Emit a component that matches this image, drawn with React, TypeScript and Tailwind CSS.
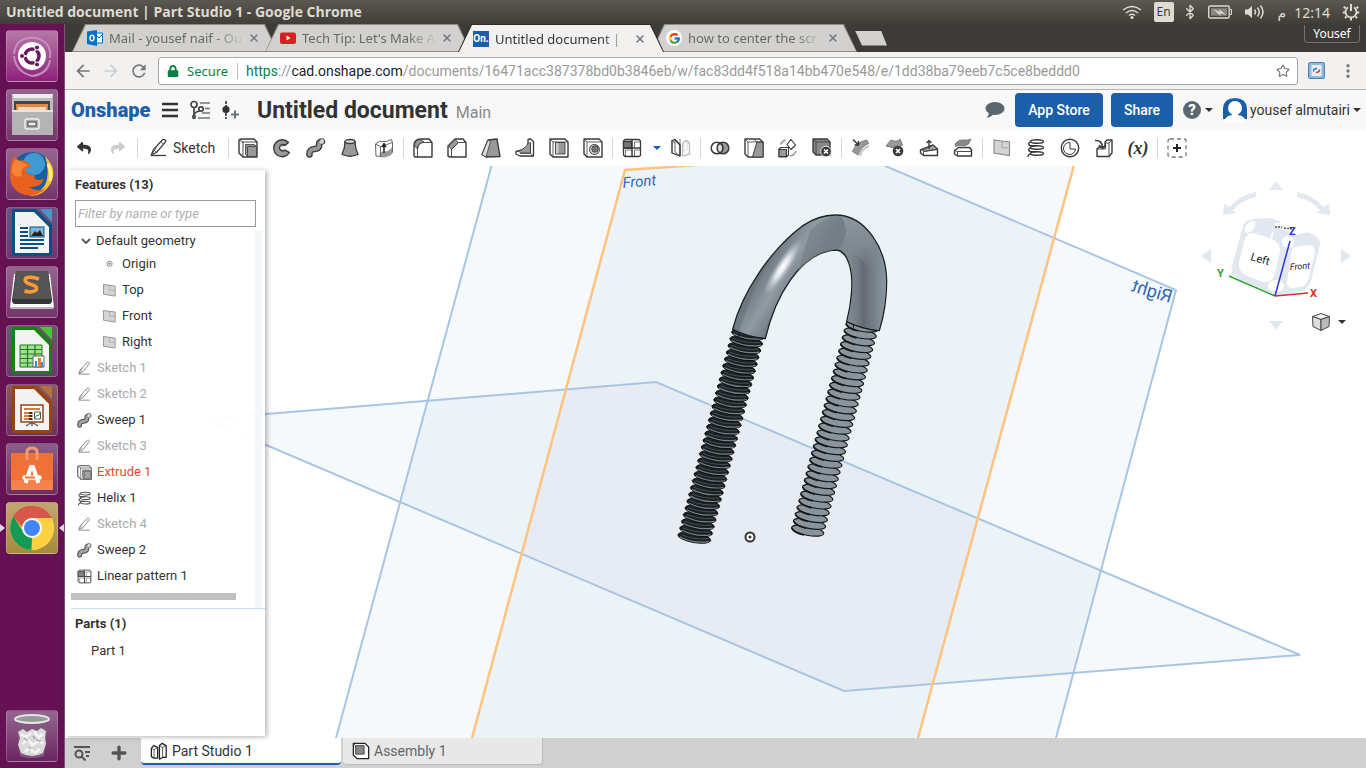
import type { ReactNode } from "react";
import { Bluetooth, MoreVertical, Plus, Star, X } from "lucide-react";
import { FcGoogle } from "react-icons/fc";
import { FaLock, FaReply, FaShare } from "react-icons/fa";
import { MdArrowBack, MdArrowForward, MdRefresh } from "react-icons/md";

const ink = "#3a3a3a";
const mid = "#999999";

/* ---------- feature icons, all on a 20 x 20 grid ---------- */

const icons: Record<string, ReactNode> = {
  sketch: (
    <g fill="none" stroke={ink} strokeWidth="1.3">
      <path d="M2 17.5h15" />
      <path d="M2.5 16.5l2-5L13.5 1.8q1.6-1 2.8.4.9 1-.2 2.2L7.5 14.5z" />
      <path d="M4.5 11.5l3 3M12 3.7l2.8 2.6M2.5 16.5l5-7" strokeWidth=".8" />
    </g>
  ),
  extrude: (
    <g stroke={ink} strokeWidth="1.4" strokeLinejoin="round">
      <path d="M1 3q0-2 2-2h13l3 3v15H5l-4-4z" fill="#fff" />
      <path d="M4 4h15M5 19V4M1.5 1.5L5 4.5" fill="none" strokeWidth=".9" />
      <path d="M7.5 6.5h9l2 2v10h-9l-2-2z" fill={mid} strokeWidth=".8" />
      <path d="M9.5 8.5h9M9.5 8.5v10" strokeWidth=".8" />
    </g>
  ),
  revolve: (
    <g stroke={ink} strokeWidth="1.4" strokeLinejoin="round">
      <path d="M16.5 4.500A8.500 8.500 0 1 0 17.500 14.500l-4.500-2.500a3.200 3.200 0 1 1 0-4.500z" fill={mid} />
      <path d="M9.500 8.500l3-1.500 4-2.500M9.500 12l3 .5 5 2" fill="none" strokeWidth=".8" />
    </g>
  ),
  sweep: (
    <g fill="none" strokeLinecap="round">
      <path d="M3.5 16.5q-.5-5 5-5.500t4.500-4.500q0-2.500 3-3" stroke={ink} strokeWidth="6.500" />
      <path d="M3.5 16.5q-.5-5 5-5.500t4.500-4.500q0-2.500 3-3" stroke={mid} strokeWidth="3.800" />
      <ellipse cx="16" cy="3.500" rx="2" ry="2.400" fill="#d5d5d5" />
    </g>
  ),
  loft: (
    <g stroke={ink} strokeWidth="1.3" strokeLinejoin="round">
      <path d="M5 3.500Q5 10 2 16.500q8 3.500 16 0Q15 10 15 3.500z" fill={mid} />
      <ellipse cx="10" cy="3.500" rx="5" ry="2" fill="#ddd" />
    </g>
  ),
  thicken: (
    <g stroke="#666" strokeWidth="1" strokeLinejoin="round">
      <path d="M1.500 6q4-4 7-2.500 4 1 9-2l1 3v10q-2 3-4 2.500-4 3-7.500 1.500l-5-.5z" fill="#fff" />
      <path d="M5 16q1-3 5-2.500 4 .5 8-4v6q-3 4-9 3.500z" fill={mid} stroke="none" />
      <path d="M1.500 6l5 2.500q5-1 11.500-4M6.500 8.500V18" fill="none" />
      <path d="M10 15V6M8.300 8.500L10 5.500l1.700 3z" stroke="#222" strokeWidth="1.500" fill="#222" />
    </g>
  ),
  fillet: (
    <g stroke={ink} strokeWidth="1.4" strokeLinejoin="round">
      <path d="M1 18V8q0-6.500 6-7h9l3 3.500V19H2z" fill="#fff" />
      <path d="M1.500 8q0-6 6-6.500L11 4q-6 1-6.500 7z" fill={mid} strokeWidth=".8" />
      <path d="M4.500 19V11Q5 4.500 11 4.500h7.500" fill="none" strokeWidth=".9" />
    </g>
  ),
  chamfer: (
    <g stroke={ink} strokeWidth="1.4" strokeLinejoin="round">
      <path d="M1 18V8l7-7h8l3 3.500V19H3z" fill="#fff" />
      <path d="M1.500 8l6.500-6.500 3.500 3-7 7z" fill={mid} strokeWidth=".8" />
      <path d="M4.500 19v-7.500l7-7h7" fill="none" strokeWidth=".9" />
    </g>
  ),
  draft: (
    <g stroke={ink} strokeWidth="1.4" strokeLinejoin="round">
      <path d="M1 16.500L7 2l9-1 3 17.500-14 .5z" fill={mid} />
      <path d="M1 16.500L7 2l2.500 1.500L5 19z" fill="#ddd" strokeWidth=".8" />
    </g>
  ),
  rib: (
    <g stroke={ink} strokeWidth="1.300" strokeLinejoin="round">
      <path d="M1 13.500l12-3V1.500l2.500-.5 3 2.500V18H5l-4-2z" fill="#fff" />
      <path d="M3 13q7-1.500 10.500-8.500l2 1.500v9H6z" fill={mid} strokeWidth=".8" />
      <path d="M15.500 4v11.500H5M15.500 15.500l3 2.500" fill="none" strokeWidth=".8" />
    </g>
  ),
  shell: (
    <g stroke={ink} strokeWidth="1.400" strokeLinejoin="round">
      <path d="M1 1h15l3 3v15H4l-3-3z" fill="#fff" />
      <path d="M4 4h15M4 19V4L1 1" fill="none" strokeWidth=".8" />
      <path d="M6.500 4.500h9.500V16H6.500z" fill={mid} strokeWidth=".9" />
      <path d="M7 5h2.500v10.500H7z" fill="#ccc" stroke="none" />
    </g>
  ),
  hole: (
    <g stroke={ink} strokeWidth="1.400" strokeLinejoin="round">
      <path d="M1 1h15l3 3v15H4l-3-3z" fill="#fff" />
      <path d="M4 4h15M4 19V4L1 1" fill="none" strokeWidth=".8" />
      <circle cx="11.500" cy="11.500" r="5" fill="#ddd" strokeWidth="1" />
      <circle cx="12" cy="11" r="3.300" fill="#777" strokeWidth=".8" />
    </g>
  ),
  pattern: (
    <g stroke={ink} strokeWidth="1.300" strokeLinejoin="round">
      <path d="M1.500 3l1.500-1.500h14l1.500 1.500v14.500l-1.500 1H3l-1.500-1.500z" fill="#fff" />
      <path d="M1.500 3.500h8V10h-8z" fill="#777" />
      <path d="M10 1.500v17M1.500 10h17" fill="none" strokeWidth="1.500" />
      <path d="M3.500 12h6M12.500 12h6M12.500 4h6M12.500 4v5.500M3.500 12v6M12.500 12v6" strokeWidth=".7" fill="none" />
    </g>
  ),
  mirror: (
    <g strokeWidth="1.300" strokeLinejoin="round">
      <path d="M11.500 7q0-3 2-4h3l2 2.500V16h-2l-1 1.500h-4z" fill="#fff" stroke="#bbb" />
      <path d="M14 4.500q-1 1-1 3V15M16 3v10" fill="none" stroke="#ccc" strokeWidth=".8" />
      <path d="M1 15V2.500l3-1L9 7v11l-4-1.500z" fill="#fff" stroke="#222" />
      <path d="M4 1.500V14l5 4M1 2.500L4 5M9 1v17" fill="none" stroke="#444" strokeWidth=".8" />
    </g>
  ),
  boolean: (
    <g stroke={ink} strokeWidth="1.500">
      <circle cx="13" cy="10" r="5.800" fill={mid} />
      <circle cx="7" cy="10" r="5.800" fill="#fff" />
      <path d="M10 5a5.800 5.800 0 0 1 0 10 5.800 5.800 0 0 1 0-10z" fill="#ddd" />
    </g>
  ),
  split: (
    <g stroke={ink} strokeWidth="1.400" strokeLinejoin="round">
      <path d="M1 1h14.500L19 4v15H4l-3-3z" fill="#fff" />
      <path d="M13 4h6v15H8.500z" fill={mid} strokeWidth="1" />
      <path d="M4 4h15M4 19V4L1 1M10 1.500L13 4" fill="none" strokeWidth=".8" />
    </g>
  ),
  transform: (
    <g stroke={ink} strokeWidth="1.100" strokeLinejoin="round">
      <path d="M1 11l2-1.500h7.500V17l-2 2H1z" fill="#fff" />
      <path d="M1 11.500h7.500v7H1z" fill={mid} />
      <path d="M13 1.500l4.500 5.500-4.500 4.500L9 6.500z" fill="#fff" />
      <path d="M2.500 6.500q1.500-3.500 5-4.500M12 18q4.500-.5 6-5" fill="none" stroke={mid} strokeWidth="1.500" />
    </g>
  ),
  deletePart: (
    <g stroke={ink} strokeWidth="1.400" strokeLinejoin="round">
      <path d="M1 1h14l3 3v13H4l-3-3z" fill="#888" />
      <path d="M4 4h14M4 17V4L1 1" fill="none" strokeWidth=".8" />
      <circle cx="14" cy="13.500" r="5.300" fill={ink} stroke="#fff" strokeWidth=".8" />
      <path d="M12 11.500l4 4M16 11.500l-4 4" stroke="#fff" strokeWidth="1.600" />
    </g>
  ),
  modifyFillet: (
    <g strokeLinejoin="round">
      <path d="M9 18q1.500-8 9-10" fill="none" stroke="#ccc" strokeWidth="2.500" />
      <path d="M1.500 13.500Q5 4 16 2l1.500 3.500Q10 8 7 17z" fill={mid} stroke="#777" strokeWidth=".9" />
      <path d="M2 1.500l5 5M7.500 3v4H3.500" fill="none" stroke="#333" strokeWidth="1.500" />
    </g>
  ),
  deleteFace: (
    <g strokeLinejoin="round">
      <path d="M1 8l5-6q6 3 9-1l2.500 6q-5 4-10 2.500z" fill={mid} stroke="#777" />
      <circle cx="13" cy="13" r="5.300" fill={ink} />
      <path d="M11 11l4 4M15 11l-4 4" stroke="#fff" strokeWidth="1.600" />
    </g>
  ),
  moveFace: (
    <g stroke={ink} strokeWidth="1.400" strokeLinejoin="round">
      <path d="M1.500 12L14 7l4.500 4v6.500h-14l-3-2.500z" fill="#fff" />
      <path d="M3 12l11-4.500 4 3.500-13 2.500z" fill="#aaa" strokeWidth=".8" />
      <path d="M4.500 17.500v-4l14-2" fill="none" strokeWidth=".9" />
      <path d="M10 11V3M7.500 5L10 2.500 12.500 5" fill="none" />
    </g>
  ),
  replaceFace: (
    <g stroke={ink} strokeWidth="1.400" strokeLinejoin="round">
      <path d="M2 6q4-5 9-4 4 .5 7-1l-2.500 5q-3 2.500-7 1.500-3-.5-6 1z" fill="#888" stroke="#777" strokeWidth=".9" />
      <path d="M1.500 12.500l4-3h11l2 2.500v6h-14l-3-2z" fill="#fff" />
      <path d="M1.500 12.500l3 1h14M4.500 13.500v4.500" fill="none" strokeWidth=".9" />
    </g>
  ),
  plane: (
    <g stroke="#888" strokeWidth="1.100">
      <path d="M2 2l15.500 2v13.500L2 15z" fill="#d4d4d4" />
      <path d="M10 3v6.500l7.500.5" fill="none" stroke="#aaa" />
    </g>
  ),
  helix: (
    <g fill="none" stroke="#333" strokeWidth="1.400" strokeLinecap="round">
      <ellipse cx="11" cy="3.500" rx="6.500" ry="1.800" />
      <ellipse cx="11" cy="9.500" rx="6.500" ry="1.800" />
      <ellipse cx="11" cy="15.500" rx="6.500" ry="1.800" />
      <path d="M4.500 3.500Q1 6 4 7.500l6 .2M4.500 9.500Q1 12 4 13.500l6 .2M4.500 15.500Q2 17 2 18.500" />
    </g>
  ),
  measure: (
    <g fill="none" stroke={ink} strokeWidth="1.400">
      <circle cx="10" cy="10" r="8.700" />
      <path d="M10 4.500v6.500h5.500a6 6 0 1 1-5.500-6.500z" strokeWidth="1" />
    </g>
  ),
  derive: (
    <g stroke={ink} strokeWidth="1.400" strokeLinejoin="round">
      <path d="M3 11l2-2h6V4l2-2h5v13l-3 3.500H3z" fill="#fff" />
      <path d="M3 11h8.500V5H15v13M15 5l3-3" fill="none" strokeWidth=".9" />
      <path d="M1 2.500q7-.5 7.500 6.500M5 7l3.500 3.500L12 7" fill="none" strokeWidth="1.600" />
    </g>
  ),
  custom: (
    <g fill="none" stroke="#777">
      <rect x="1" y="1" width="18" height="18" rx="2" strokeDasharray="4 3" strokeWidth="1.300" />
      <path d="M10 6v8M6 10h8" stroke="#222" strokeWidth="2" />
    </g>
  ),
  studio: (
    <g stroke="#222" strokeWidth="1.400" fill="#fff" strokeLinejoin="round">
      <path d="M1.500 7l2.500-3 4.500 2v12H4l-2.500-2zM10.500 4l3-2.500L18 4v13h-3.500l-4 2z" />
      <path d="M1.500 7l3 1.500V18M4.500 8.500l4-2.500M10.500 4l3.500 2v11M14 6l4-2" fill="none" strokeWidth=".8" />
    </g>
  ),
  assembly: (
    <g stroke="#222" strokeWidth="1.400" strokeLinejoin="round">
      <path d="M1.500 1.500h13l4 4v13H5.500l-4-4z" fill="#fff" />
      <path d="M4 4h9.500v9.500H4z" fill="#888" strokeWidth=".8" />
      <path d="M1.500 1.500L4 4" strokeWidth=".8" />
    </g>
  ),
  origin: (
    <g fill="none" stroke="#888" strokeWidth="1.300">
      <circle cx="10" cy="9" r="3.500" />
      <circle cx="10" cy="9" r="1" fill="#555" />
    </g>
  ),
};

function Icon({ name, className = "size-5" }: { name: string; className?: string }) {
  return (
    <svg viewBox="0 0 20 20" className={`shrink-0 ${className}`} aria-hidden="true">
      {icons[name]}
    </svg>
  );
}

function Caret({ className = "text-[#333]" }: { className?: string }) {
  return (
    <svg viewBox="0 0 8 4" className={`h-1 w-2 shrink-0 ${className}`} aria-hidden="true">
      <path d="M0 0h8L4 4z" fill="currentColor" />
    </svg>
  );
}

/* ---------- desktop ---------- */

function TopPanel() {
  return (
    <header className="flex h-6 shrink-0 items-center justify-between bg-linear-to-b from-[#5b5850] to-[#3f3e39] pr-[6px] pl-[6px] text-[#dfdbd2]">
      <h1 className="font-['Open_Sans','Noto_Sans',sans-serif] text-[14px] leading-6 font-bold">
        Untitled document | Part Studio 1 - Google Chrome
      </h1>
      <div className="flex items-center font-['Noto_Sans','DejaVu_Sans',sans-serif] text-[14px]">
        <svg viewBox="0 0 20 14" className="h-[14px] w-5" fill="none" stroke="currentColor" strokeWidth="1.500">
          <path d="M1 5q9-7 18 0M4 8q6-5 12 0M7 10.500q3-2.500 6 0" />
          <circle cx="10" cy="12.500" r=".8" fill="currentColor" />
        </svg>
        <span className="ml-3 flex h-5 w-5 items-center justify-center rounded-[2px] bg-[#dfdbd2] text-[12px] text-[#3c3b37]">
          En
        </span>
        <Bluetooth className="ml-2 h-[18px] w-4" strokeWidth={2} />
        <svg viewBox="0 0 24 14" className="ml-[10px] h-[14px] w-6" fill="none" stroke="currentColor">
          <rect x=".7" y="1" width="20.500" height="12" rx="1.500" strokeWidth="1.400" />
          <rect x="3" y="3.300" width="16" height="7.400" fill="#8a877f" stroke="none" />
          <path d="M22 4.500h1.500v5H22" />
          <path d="M5 4l7 3-1-3 7 6-6-2 1 3z" fill="currentColor" stroke="none" />
        </svg>
        <svg viewBox="0 0 22 16" className="ml-3 h-4 w-[22px]" fill="none" stroke="currentColor" strokeWidth="1.500">
          <path d="M1 5.500h3l4-3.500v12l-4-3.500H1z" fill="currentColor" stroke="none" />
          <path d="M10.500 5.500q2 2.500 0 5M13.500 3.500q3.500 4.500 0 9M16.500 1.500q5 6.500 0 13" />
        </svg>
        <span className="ml-3">م</span>
        <span className="ml-2">12:14</span>
        <svg viewBox="0 0 18 18" className="ml-3 size-[18px]" fill="none" stroke="currentColor">
          <path d="M6 4.300a5.500 5.500 0 1 0 6 0" strokeWidth="1.800" />
          <path d="M9 1v7" strokeWidth="2" />
          <path d="M3.600 5.200L1.800 3.800M14.400 5.200l1.800-1.400M3 9.500H.8M15 9.500h2.200M4.500 13.500L3 15M13.500 13.500L15 15M9 15v2.500" strokeWidth="2" />
        </svg>
      </div>
    </header>
  );
}

const pageIcon = (dark: string, light: string, content: ReactNode) => (
  <>
    <path d="M6 2h24l16 16v28q0 3-3 3H9q-3 0-3-3z" fill={dark} />
    <path d="M9 5h19l15 15v26H9z" fill="#f3f3f3" />
    <path d="M34 2h12v13z" fill={light} />
    {content}
  </>
);

const launcherApps: { name: string; tile: string; art: ReactNode }[] = [
  {
    name: "Search your computer",
    tile: "bg-linear-to-b from-[#b477a6] to-[#8f1d7d]",
    art: (
      <>
        <path d="M8 24Q10 6 30 8q16 4 14 20M44 30q-2 14-18 16Q10 42 8 26" fill="none" stroke="#c68fbc" strokeWidth="2" />
        <circle cx="26" cy="26" r="14" fill="#fff" />
        <circle cx="26" cy="26" r="7" fill="none" stroke="#6a1a5c" strokeWidth="3.500" />
        <path d="M26 26H14M26 26l6-11M26 26l6 11" stroke="#fff" strokeWidth="1.500" />
        <circle cx="26" cy="26" r="5" fill="#fff" />
        <circle cx="16" cy="26" r="2.500" fill="#6a1a5c" stroke="#fff" />
        <circle cx="31" cy="17.500" r="2.500" fill="#6a1a5c" stroke="#fff" />
        <circle cx="31" cy="34.500" r="2.500" fill="#6a1a5c" stroke="#fff" />
      </>
    ),
  },
  {
    name: "Files",
    tile: "bg-linear-to-b from-[#95658f] to-[#73376b]",
    art: (
      <>
        <path d="M6 5h41v41H6z" fill="#bcbcbc" />
        <path d="M6 5h41l-2 4H8z" fill="#ededed" />
        <path d="M8 12h36v10H8z" fill="#444" />
        <path d="M10 15h32v8H10z" fill="#e08746" />
        <path d="M12 18h28v4H12z" fill="#f8d9b5" />
        <path d="M6 21h41v25H6z" fill="#b4b4b4" />
        <path d="M6 21h41v2H6z" fill="#e2e2e2" />
        <rect x="19" y="30" width="14" height="10" rx="2" fill="#aaa" stroke="#eee" strokeWidth="1.500" />
        <rect x="22" y="33" width="8" height="4" fill="#eee" stroke="#444" />
      </>
    ),
  },
  {
    name: "Firefox",
    tile: "bg-linear-to-b from-[#95658f] to-[#73376b]",
    art: (
      <>
        <circle cx="26" cy="25" r="21" fill="#1c5d9f" />
        <circle cx="28" cy="16" r="11" fill="#3f9ad2" />
        <path d="M39 8q13 13 6 27-8 14-22 13 16-5 18-17 2-12-2-23z" fill="#fbc22e" />
        <path d="M42 16q4 8 2 17" stroke="#fff0a0" strokeWidth="3" fill="none" />
        <path d="M8 8l5 5q6-2 9 2l3 3-6 3q2 7 10 6-3 7 9 4-3 9-15 8 8 6 18 1-10 9-22 7Q4 43 4 27 4 14 8 8z" fill="#e8601f" />
        <path d="M9 12q5 0 8 3l5 2-5 3q-3 4-1 8Q8 30 6 24q0-7 3-12z" fill="#f58433" />
      </>
    ),
  },
  {
    name: "LibreOffice Writer",
    tile: "bg-linear-to-b from-[#6f5280] to-[#6f3670]",
    art: pageIcon(
      "#0b4f83",
      "#4c94c5",
      <>
        <path d="M14 21h8M14 25h8M14 29h8M14 33h24M14 37h24M14 41h18" stroke="#0b4f83" strokeWidth="2" />
        <rect x="24" y="20" width="14" height="10" fill="#7eb8dc" stroke="#0b4f83" />
        <path d="M25 29l4-5 2 2 3-3 3 6z" fill="#222" />
      </>,
    ),
  },
  {
    name: "Sublime Text",
    tile: "bg-linear-to-b from-[#95658f] to-[#73376b]",
    art: (
      <>
        <path d="M8 8h36l4 34H4z" fill="#fff" />
        <path d="M5 42h42" stroke="#bbb" strokeWidth="2" />
        <path d="M10 5h32l4 29q0 4-3 4H9q-3 0-3-4z" fill="#333" />
        <path d="M10 5h32l3 28H7z" fill="#555" />
        <path d="M33 13q-8-3-13-1-3 4 5 6.500 8 2 4.500 6-4 2.500-11 .5" fill="none" stroke="#ff9a3c" strokeWidth="3.500" />
      </>
    ),
  },
  {
    name: "LibreOffice Calc",
    tile: "bg-linear-to-b from-[#6b5a68] to-[#6f3670]",
    art: pageIcon(
      "#15830f",
      "#4fc13b",
      <>
        <path d="M14 20h22v22H14z" fill="#a9dc9c" stroke="#15830f" />
        <path d="M14 24.500h22M14 29h22M14 33.500h22M14 38h22M21.500 20v22M29 20v22" stroke="#15830f" strokeWidth="1.200" />
        <path d="M27 31h11v11H27z" fill="#fff" stroke="#666" />
        <path d="M29 36h2v6h-2z" fill="#2b8bd8" />
        <path d="M32 33h3v9h-3z" fill="#e57b2c" />
        <path d="M35 37h2v5h-2z" fill="#2b8bd8" />
      </>,
    ),
  },
  {
    name: "LibreOffice Impress",
    tile: "bg-linear-to-b from-[#895a60] to-[#6f3064]",
    art: pageIcon(
      "#9a4311",
      "#b5713d",
      <>
        <rect x="15" y="21" width="22" height="17" fill="#fff" stroke="#9a4311" strokeWidth="1.500" />
        <path d="M18 25h16M18 29h4M18 32h4M18 35h4" stroke="#dd7b3f" strokeWidth="2" />
        <path d="M22.500 29h4M22.500 32h4M22.500 35h4" stroke="#5c240b" strokeWidth="2" />
        <path d="M28.500 28h6v7h-6z" fill="#fff" stroke="#555" />
        <path d="M29 34l2-3 1 1 2-3" stroke="#2c9a3c" fill="none" />
        <path d="M26 38l-6 4M26 38l6 4M26 38v4" stroke="#666" strokeWidth="1.500" />
      </>,
    ),
  },
  {
    name: "Ubuntu Software",
    tile: "bg-linear-to-b from-[#8a5d87] to-[#6c2e64]",
    art: (
      <>
        <path d="M5 10h42v37H5z" fill="#ef7137" />
        <path d="M5 37h42v10H5z" fill="#f4834b" />
        <path d="M21 17V9q0-4 5-4t5 4v8" fill="none" stroke="#f29b70" strokeWidth="3" />
        <path d="M19.500 40L25 24h2l5.500 16" fill="none" stroke="#fff" strokeWidth="4" />
        <path d="M18.500 34.500h15" stroke="#fff" strokeWidth="4.500" strokeLinecap="round" />
        <path d="M19 34.500h10" stroke="#ef7137" strokeWidth="2" />
      </>
    ),
  },
  {
    name: "Google Chrome",
    tile: "bg-linear-to-b from-[#c2a670] to-[#a68a3f]",
    art: (
      <>
        <circle cx="26" cy="26" r="22" fill="#fdd13f" />
        <path d="M26 26L7 15a22 22 0 0 1 38.500 1z" fill="#db4437" />
        <path d="M4.500 22Q5 18 7.500 14L18 31l8 5-.5 12A22 22 0 0 1 4.500 22z" fill="#159957" />
        <path d="M26 16h19.500a22 22 0 0 1-20 32l9-18z" fill="#fdd13f" />
        <path d="M7 14Q15 3 27 4q13 1 18.500 12H26q-8 0-10 9z" fill="#d9564b" />
        <circle cx="26" cy="26" r="10" fill="#fff" />
        <circle cx="26" cy="26" r="8" fill="#4285f4" />
      </>
    ),
  },
];

function LauncherTile({ name, tile, art }: { name: string; tile: string; art: ReactNode }) {
  return (
    <button aria-label={name} className={`size-13 rounded-[4px] border border-white/20 ${tile}`}>
      <svg viewBox="1 1 50 50" className="size-full">
        {art}
      </svg>
    </button>
  );
}

function Launcher() {
  return (
    <nav className="flex w-[65px] shrink-0 flex-col justify-between border-r border-[#80527a] bg-[#651154] py-[6px] pl-[6px]">
      <ul className="flex flex-col gap-[7px]">
        {launcherApps.map((app) => (
          <li key={app.name} className="relative flex">
            <LauncherTile {...app} />
            {app.name === "Google Chrome" && (
              <>
                <svg viewBox="0 0 5 8" className="absolute top-[22px] -left-[6px] h-2 w-[5px]">
                  <path d="M0 0l5 4-5 4z" fill="#e3dbe1" />
                </svg>
                <svg viewBox="0 0 5 8" className="absolute top-[22px] right-0 h-2 w-[5px]">
                  <path d="M5 0L0 4l5 4z" fill="#e3dbe1" />
                </svg>
              </>
            )}
          </li>
        ))}
      </ul>
      <LauncherTile
        name="Trash"
        tile="bg-linear-to-b from-[#95658f] to-[#6c2264]"
        art={
          <>
            <path d="M10 9h32l-4 37q-12 4-24 0z" fill="#84577f" />
            <path d="M12 22l5-3 4 3 5-3 5 2 4-3 5 3-1 7 1 6-3 9q-11 6-22 0l-3-8 2-7z" fill="#dadada" />
            <path d="M15 24l5 3 5-4M28 22l5 5 4-3M16 34l6-4 5 5 6-5 4 4M19 42l4-4 6 5 5-4" stroke="#f4f4f4" strokeWidth="2.500" fill="none" />
            <path d="M18 28l4 3M30 30l5 1M22 37l3 2M27 26l2 3" stroke="#a9a9a9" strokeWidth="1.500" />
            <ellipse cx="26" cy="9" rx="17" ry="4" fill="#999" stroke="#e4e4e4" strokeWidth="2" />
          </>
        }
      />
    </nav>
  );
}

/* ---------- browser ---------- */

const browserTabs = [
  {
    title: "Mail - yousef naif - Ou",
    icon: (
      <svg viewBox="0 0 16 16" className="size-4 shrink-0">
        <path d="M8 3h7.500v10H8z" fill="#fff" stroke="#0072c6" />
        <path d="M9 5l3 3 4-4" fill="none" stroke="#0072c6" />
        <path d="M0 1.500L10 0v16L0 14z" fill="#0072c6" />
        <ellipse cx="5" cy="8" rx="2" ry="2.700" fill="none" stroke="#fff" strokeWidth="1.500" />
      </svg>
    ),
  },
  {
    title: "Tech Tip: Let's Make A",
    icon: (
      <svg viewBox="0 0 16 16" className="size-4 shrink-0">
        <rect y="2.500" width="16" height="11.500" rx="2" fill="#d8201f" />
        <path d="M6.500 5.500l4 2.500-4 2.500z" fill="#fff" />
      </svg>
    ),
  },
  {
    title: "Untitled document |",
    active: true,
    icon: (
      <span className="flex size-4 shrink-0 items-center justify-center bg-[#1b5faa] font-['Roboto',sans-serif] text-[10px] font-bold text-white">
        On.
      </span>
    ),
  },
  {
    title: "how to center the scr",
    icon: (
      <span className="flex size-4 shrink-0 items-center justify-center rounded-full bg-white">
        <FcGoogle className="size-[13px]" />
      </span>
    ),
  },
];

function TabStrip() {
  return (
    <div className="flex h-7 shrink-0 items-end justify-between bg-[#3c3b37] pr-[6px] pl-[7px]">
      <div role="tablist" aria-label="Browser tabs" className="flex items-center">
        {browserTabs.map(({ title, icon, active }, i) => (
          <div
            key={title}
            className={`h-7 w-[206px] pt-px [clip-path:polygon(0_100%,13px_0,calc(100%-13px)_0,100%_100%)] ${
              i > 0 ? "-ml-[13px]" : ""
            } ${active ? "relative z-10 bg-[#2e2d2a]" : "bg-[#8b8a87] pb-px"}`}
          >
            <div
              className={`flex h-full items-center pr-[18px] pl-[15px] [clip-path:polygon(1px_100%,14px_0,calc(100%-14px)_0,calc(100%-1px)_100%)] ${
                active ? "bg-[#f2f1f0] text-[#333]" : "bg-[#d2d1cf] text-[#6a6967]"
              }`}
            >
              <button role="tab" aria-selected={!!active} className="flex min-w-0 flex-1 items-center gap-[6px]">
                {icon}
                <span className="min-w-0 flex-1 overflow-hidden text-left font-['Noto_Sans',sans-serif] text-[13px] leading-5 whitespace-nowrap [mask-image:linear-gradient(to_right,#000_78%,transparent)]">
                  {title}
                </span>
              </button>
              <button aria-label="Close tab" className="ml-1">
                <X className="size-3 text-[#777]" strokeWidth={3} />
              </button>
            </div>
          </div>
        ))}
        <button aria-label="New tab" className="ml-[-2px] h-[15px] w-8 bg-[#d2d1cf] [clip-path:polygon(0_0,26px_0,100%_100%,7px_100%)]" />
      </div>
      <button className="mb-[9px] h-[18px] w-14 rounded-b-[4px] border border-t-0 border-[#75736c] font-['Noto_Sans',sans-serif] text-[12px] leading-4 text-white">
        Yousef
      </button>
    </div>
  );
}

function AddressBar() {
  return (
    <div className="flex h-[38px] shrink-0 items-center border-b border-[#b7b5b3] bg-[#f2f1f0] pr-[9px] pl-2 text-[#777]">
      <button aria-label="Back" className="w-7">
        <MdArrowBack className="size-5" />
      </button>
      <button aria-label="Forward" className="w-7 text-[#d0d0d0]">
        <MdArrowForward className="size-5" />
      </button>
      <button aria-label="Reload" className="w-[29px]">
        <MdRefresh className="size-5" />
      </button>
      <div className="flex h-7 min-w-0 flex-1 items-center rounded-[3px] border border-[#a5a5a5] bg-white pr-[7px] pl-2 font-['Noto_Sans',sans-serif] text-[13px] leading-5">
        <FaLock className="size-3 shrink-0 text-[#0b8043]" />
        <span className="ml-2 w-[42px] text-[#0b8043]">Secure</span>
        <span className="ml-2 h-4 w-px bg-[#bbb]" />
        <span className="ml-2 min-w-0 flex-1 truncate font-['Roboto',sans-serif] text-[14px] text-[#999]">
          <span className="text-[#0b8043]">https</span>://
          <span className="text-[#222]">cad.onshape.com</span>
          /documents/16471acc387378bd0b3846eb/w/fac83dd4f518a14bb470e548/e/1dd38ba79eeb7c5ce8beddd0
        </span>
        <button aria-label="Bookmark this page">
          <Star className="size-[14px]" />
        </button>
      </div>
      <button aria-label="Extension" className="ml-[10px]">
        <svg viewBox="0 0 17 17" className="size-[17px]">
          <rect x=".5" y=".5" width="16" height="16" rx="1.500" fill="#8db9dd" stroke="#4d82b0" />
          <rect x="3.500" y="3" width="10" height="11" fill="#e9eff5" />
          <path d="M5.500 9.500q0-3 3.500-3" stroke="#2878c8" strokeWidth="1.500" fill="none" />
          <path d="M11.500 7.500q0 3-3.500 3" stroke="#d8342c" strokeWidth="1.500" fill="none" />
        </svg>
      </button>
      <button aria-label="Menu" className="ml-[14px]">
        <MoreVertical className="size-[18px]" strokeWidth={2.500} />
      </button>
    </div>
  );
}

/* ---------- Onshape ---------- */

function DocumentHeader() {
  return (
    <header className="flex h-10 shrink-0 items-center bg-[#f8f8f8] pr-[5px] pl-[6px] text-[#333]">
      <a href="#" className="w-[78px] text-[20px] leading-6 font-black text-[#1b5faa]">
        Onshape
      </a>
      <button aria-label="Main menu" className="ml-[13px]">
        <svg viewBox="0 0 16 16" className="size-4">
          <path d="M0 2h16M0 8h16M0 14h16" stroke="#333" strokeWidth="2.600" />
        </svg>
      </button>
      <button aria-label="Versions and history" className="ml-3">
        <svg viewBox="0 0 20 20" className="size-5" fill="none" stroke="#444" strokeWidth="1.700">
          <circle cx="4" cy="4.500" r="3" />
          <circle cx="11" cy="9" r="2.200" />
          <path d="M4 7.500V16M4 15q1-3.500 6-4" />
          <circle cx="4" cy="17" r="1.300" />
          <path d="M10 3h10M15 8.500h5M12 13h8M8 18h12" stroke="#6b757d" />
        </svg>
      </button>
      <button aria-label="Create version" className="ml-3">
        <svg viewBox="0 0 18 20" className="h-5 w-[18px]" fill="none" stroke="#333" strokeWidth="1.600">
          <path d="M4 1v3M4 5v3M4 13v3M4 17v2" />
          <circle cx="4" cy="9.500" r="2.800" fill="#333" />
          <path d="M9 14.500h8M13 10.500v8" stroke="#6b757d" strokeWidth="2" />
        </svg>
      </button>
      <h2 className="ml-[17px] pt-[2px] text-[23px] leading-8 font-bold">Untitled document</h2>
      <span className="ml-2 pt-[6px] text-[16px] leading-6 text-[#888]">Main</span>
      <button aria-label="Comments" className="ml-auto">
        <svg viewBox="0 0 20 18" className="h-[18px] w-5">
          <path d="M10 1c5.500 0 9.500 3 9.500 6.500S15.500 14 10 14q-1 0-2-.2Q5.500 16.500 1.500 17q2-2 2.300-4.800Q.5 10.300.5 7.500C.5 4 4.500 1 10 1z" fill="#5b6770" />
        </svg>
      </button>
      <button className="ml-[10px] h-[34px] w-[88px] rounded-[4px] bg-[#1b5faa] text-[14px] font-medium text-white">
        App Store
      </button>
      <button className="ml-2 h-[34px] w-[62px] rounded-[4px] bg-[#1b5faa] text-[14px] font-medium text-white">
        Share
      </button>
      <button aria-label="Help" className="ml-[10px] flex items-center gap-1">
        <span className="flex size-[18px] items-center justify-center rounded-full bg-[#5b6770] text-[15px] leading-none font-black text-white">
          ?
        </span>
        <Caret />
      </button>
      <button className="ml-[10px] flex items-center gap-[3px] text-[14px] leading-5">
        <svg viewBox="0 0 24 24" className="size-6">
          <path d="M0 21V10Q1 0 12 0t12 10v11z" fill="#1b5faa" />
          <circle cx="12" cy="10" r="7" fill="#fff" />
          <path d="M9 15h6v2q7 1 8 7H1q1-6 8-7z" fill="#fff" />
        </svg>
        yousef almutairi
        <Caret />
      </button>
    </header>
  );
}

const toolGroups = [
  ["extrude", "revolve", "sweep", "loft", "thicken"],
  ["fillet", "chamfer", "draft", "rib", "shell", "hole"],
  ["pattern", "mirror"],
  ["boolean", "split", "transform", "deletePart"],
  ["modifyFillet", "deleteFace", "moveFace", "replaceFace"],
  ["plane", "helix", "measure", "derive", "variable"],
  ["custom"],
];

function Separator() {
  return <span className="mx-[2px] h-5 w-px bg-[#d5d5d5]" />;
}

function FeatureToolbar() {
  return (
    <div role="toolbar" aria-label="Features" className="flex h-9 shrink-0 items-center bg-white pl-[2px] text-[#333]">
      <button aria-label="Undo" className="flex w-[34px] justify-center">
        <FaReply className="size-[14px]" />
      </button>
      <button aria-label="Redo" className="flex w-[34px] justify-center text-[#ccc]">
        <FaShare className="size-[14px]" />
      </button>
      <Separator />
      <button className="flex w-[86px] items-center gap-1 pl-[9px] text-[14px] leading-5">
        <Icon name="sketch" />
        Sketch
      </button>
      {toolGroups.map((group) => (
        <div key={group[0]} className="flex items-center">
          <Separator />
          {group.map((tool) => (
            <div key={tool} className="flex items-center">
              <button aria-label={tool} className="flex w-[34px] justify-center">
                {tool === "variable" ? (
                  <span className="font-['Liberation_Serif',serif] text-[18px] leading-5 font-bold italic">(x)</span>
                ) : (
                  <Icon name={tool} />
                )}
              </button>
              {tool === "pattern" && (
                <button aria-label="More patterns" className="flex w-[15px] justify-center">
                  <Caret className="text-[#1b5faa]" />
                </button>
              )}
            </div>
          ))}
        </div>
      ))}
    </div>
  );
}

const planes = ["Top", "Front", "Right"];

const features = [
  { name: "Sketch 1", icon: "sketch", muted: true },
  { name: "Sketch 2", icon: "sketch", muted: true },
  { name: "Sweep 1", icon: "sweep" },
  { name: "Sketch 3", icon: "sketch", muted: true },
  { name: "Extrude 1", icon: "extrude", failed: true },
  { name: "Helix 1", icon: "helix" },
  { name: "Sketch 4", icon: "sketch", muted: true },
  { name: "Sweep 2", icon: "sweep" },
  { name: "Linear pattern 1", icon: "pattern" },
];

function FeaturePanel() {
  return (
    <aside className="relative mt-1 mb-[2px] flex w-[200px] flex-col bg-white/95 pl-[6px] text-[13px] leading-5 text-[#333] shadow-[2px_1px_5px_rgba(0,0,0,0.3)]">
      <div className="flex flex-col gap-[5px] pt-[5px] pr-[9px] pb-1 pl-1">
        <h3 className="font-bold">Features (13)</h3>
        <input
          type="text"
          aria-label="Filter features"
          placeholder="Filter by name or type"
          className="h-[27px] w-full border border-[#999] bg-white px-[2px] placeholder:text-[#b0b0b0] placeholder:italic"
        />
      </div>
      <div className="mr-[3px] flex-none border-r-[7px] border-[#f3f6f8] pb-2">
        <button className="flex h-5 items-center gap-[5px] pl-[10px]">
          <svg viewBox="0 0 10 6" className="h-[6px] w-[10px]">
            <path d="M1 1l4 4 4-4" fill="none" stroke="#555" strokeWidth="1.800" />
          </svg>
          Default geometry
        </button>
        <ul>
          <li className="flex h-[26px] items-center gap-[5px] pl-[31px]">
            <Icon name="origin" className="size-[15px]" />
            Origin
          </li>
          {planes.map((name) => (
            <li key={name} className="flex h-[26px] items-center gap-[5px] pl-[31px]">
              <Icon name="plane" className="size-[15px]" />
              {name}
            </li>
          ))}
          {features.map(({ name, icon, muted, failed }) => (
            <li
              key={name}
              className={`flex h-[26px] items-center gap-[5px] pl-[6px] ${
                muted ? "text-[#aaa]" : failed ? "text-[#e04e2b]" : ""
              }`}
            >
              <Icon name={icon} className={`size-[15px] ${muted ? "opacity-60" : "opacity-90"}`} />
              {name}
            </li>
          ))}
        </ul>
        <div className="mt-1 h-[7px] w-[165px] bg-[#c1c1c1]" />
      </div>
      <div className="border-t border-[#c9d9e6] pt-[5px] pl-1">
        <h3 className="font-bold">Parts (1)</h3>
        <p className="pt-[7px] pl-4">Part 1</p>
      </div>
    </aside>
  );
}

// drawn from the tip upwards so each thread overlaps the one below it
const leftThreads = Array.from({ length: 31 }, (_, i) => 30 - i);
const rightThreads = Array.from({ length: 31 }, (_, i) => 30 - i);

function UBolt() {
  return (
    <g transform="translate(660 200) scale(0.3333)" strokeLinejoin="round">
      <defs>
        <linearGradient id="arc" gradientUnits="userSpaceOnUse" x1="300" y1="170" x2="425" y2="250">
          <stop offset="0" stopColor="#69737b" />
          <stop offset=".3" stopColor="#77828a" />
          <stop offset=".6" stopColor="#909ba3" />
          <stop offset="1" stopColor="#6d7780" />
        </linearGradient>
        <linearGradient id="bend" gradientUnits="userSpaceOnUse" x1="565" y1="240" x2="680" y2="240">
          <stop offset="0" stopColor="#7f8991" />
          <stop offset=".2" stopColor="#767f87" />
          <stop offset=".4" stopColor="#666a72" />
          <stop offset=".75" stopColor="#7b868f" />
          <stop offset="1" stopColor="#8d99a1" />
        </linearGradient>
        <radialGradient id="shine">
          <stop offset="0" stopColor="#fff" />
          <stop offset=".35" stopColor="#f2f5f8" stopOpacity=".85" />
          <stop offset="1" stopColor="#b5bfc6" stopOpacity="0" />
        </radialGradient>
        <linearGradient id="crown" gradientUnits="userSpaceOnUse" x1="560" y1="50" x2="570" y2="220">
          <stop offset="0" stopColor="#8b979f" />
          <stop offset=".5" stopColor="#7e8991" />
          <stop offset="1" stopColor="#7e8991" stopOpacity="0" />
        </linearGradient>
      </defs>

      {leftThreads.map((i) => (
        <g key={i} transform={`translate(${264 - i * 5.37} ${404 + i * 20.3}) rotate(10)`}>
          <ellipse rx="50" ry="15" fill="#1b2023" stroke="#0c0e10" strokeWidth="2.500" />
          <path d="M-44 5q44 14 90-1" fill="none" stroke="#788289" strokeWidth="3.500" />
          <path d="M-40-2q38 9 82-2" fill="none" stroke="#596168" strokeWidth="2" />
          <path d="M-40-9q36 7 72-2" fill="none" stroke="#394045" strokeWidth="2" />
        </g>
      ))}
      {rightThreads.map((i) => (
        <g key={i} transform={`translate(${606 - i * 5.43} ${380 + i * 20.4}) rotate(11)`}>
          <ellipse rx="49" ry="14" fill="#89949c" stroke="#15181a" strokeWidth="3.500" />
          <path d="M-48 1q6 12 40 14" fill="none" stroke="#15181a" strokeWidth="5" />
        </g>
      ))}

      <path
        d="M218 388C245 280 330 150 430 76Q475 46 525 45C620 45 680 150 680 245Q680 320 658 392Q610 388 560 365C576 305 580 240 571 205Q558 150 525 150C420 158 345 290 316 416Q260 410 218 388z"
        fill="url(#arc)"
        stroke="#1c2023"
        strokeWidth="4"
      />
      <path d="M545 52Q575 100 537 147L525 149Q460 158 415 215L450 90Q490 50 545 52z" fill="#76818a" fillOpacity=".7" />
      <path
        d="M525 47C620 47 678 150 678 245Q678 320 656 390Q610 386 562 364C578 305 582 240 573 205Q560 152 537 147Q575 100 545 52z"
        fill="url(#bend)"
      />
      <path d="M545 52Q625 60 660 170L640 220Q590 150 537 147Q575 100 545 52z" fill="url(#crown)" />
      <path d="M221 387C247 300 315 180 370 128C300 220 270 290 237 396z" fill="#5f6870" fillOpacity=".35" />
      <ellipse rx="105" ry="22" transform="translate(368 202) rotate(-57)" fill="url(#shine)" />
      <path d="M218 388q45 24 98 28M560 365q48 24 98 27M237 397v20M580 374v18" fill="none" stroke="#1c2023" strokeWidth="3" />
    </g>
  );
}

function ModelView() {
  return (
    <svg
      viewBox="65 166 1301 572"
      preserveAspectRatio="xMidYMin slice"
      className="absolute inset-0 size-full bg-white"
      role="img"
      aria-label="U-bolt model with default planes"
    >
      <g fill="#5693b9" fillOpacity=".06">
        <path d="M492 166H883L1176 290 1056 738H336z" />
        <path d="M625 170l71-4h378L918 738H472z" />
        <path d="M205 419l451-37 644 273-456 36z" />
      </g>
      <path d="M567 389l89-7 321 136-44 166-89 7-323-136z" fill="#e7ebf3" />
      <g fill="none" stroke="#a8c5e3" strokeWidth="2">
        <path d="M336 738L492 164M883 165l293 125-120 448" />
        <path d="M205 419l451-37 644 273-456 36z" />
      </g>
      <path d="M472 738L625 170l73-5M1074 165L918 738" fill="none" stroke="#ffc380" strokeWidth="2.500" />
      <g className="font-['Roboto',sans-serif]" fill="#3268b4">
        <text x="623" y="188" fontSize="15" fontStyle="italic" transform="rotate(-5 623 188)">
          Front
        </text>
        <text fontSize="18" transform="translate(1170 303) rotate(17) scale(-1 1)">
          Right
        </text>
      </g>
      <UBolt />
      <circle cx="750" cy="537" r="4.500" fill="#fff" stroke="#333" strokeWidth="2" />
      <circle cx="750" cy="537" r="1.500" fill="#333" />
    </svg>
  );
}

function ViewCube() {
  return (
    <div className="absolute top-[10px] right-[14px] flex w-[152px] flex-col items-end">
      <svg viewBox="1200 176 152 156" className="h-[156px] w-[152px]" role="img" aria-label="View cube">
        <g fill="#e1e8ef">
          <path d="M1276 181l7 9h-14zM1276 330l7-9h-14zM1201 256l10-7v14zM1351 256l-10-7v14z" />
          <path d="M1256 192q-16 3-26 15l-6-3-1 11 13-2-3-3q9-10 23-13zM1297 192q16 3 26 15l6-3 1 11-13-2 3-3q-9-10-23-13z" />
        </g>
        <path d="M1249 220q8-2 22-2l41 16q9 4 8 11l-9 36q-2 5-8 10l-28 5-38-18q-7-5-5-12l10-36q1-8 7-10z" fill="#e1e8ef" />
        <path d="M1273 224l15-3 21 11-13 3q-12-6-23-11z" fill="#fff" />
        <path d="M1253 233l19 6q9 4 8 13l-5 21q-3 11-12 9l-16-6q-9-4-8-14l5-20q2-9 9-9z" fill="#fff" />
        <path d="M1294 247l13-2q8-1 8 7l-6 26q-2 8-9 9l-8 1q-6 0-5-7l4-25q1-8 3-9z" fill="#fff" />
        <ellipse cx="1250" cy="227" rx="4" ry="7" transform="rotate(40 1250 227)" fill="#fff" />
        <circle cx="1288" cy="242" r="6" fill="#fff" />
        <ellipse cx="1276" cy="286" rx="8" ry="6" fill="#fff" />
        <path d="M1273 232l-2 7" stroke="#fff" strokeWidth="1.500" />
        <path d="M1275 296l-46-20" stroke="#27a52b" strokeWidth="1.500" />
        <path d="M1275 296l33-3" stroke="#dd2b2b" strokeWidth="1.500" />
        <path d="M1275 296l15-55" stroke="#3232dd" strokeWidth="1.500" />
        <path d="M1275 227l7 0M1284 228l8 1" stroke="#555" strokeWidth="1.500" strokeDasharray="2 1" />
        <g className="font-['Roboto',sans-serif]">
          <text x="1250" y="260" fontSize="11" fill="#222" transform="rotate(16 1250 260)">Left</text>
          <text x="1290" y="270" fontSize="9" fontStyle="italic" fill="#222" transform="rotate(-4 1290 270)">Front</text>
          <text x="1289" y="235" fontSize="11" fontWeight="700" fill="#3232dd">Z</text>
          <text x="1217" y="277" fontSize="11" fontWeight="700" fill="#27a52b">Y</text>
          <text x="1310" y="297" fontSize="11" fontWeight="700" fill="#dd2b2b">X</text>
        </g>
      </svg>
      <button aria-label="View options" className="-mt-5 mr-[6px] flex items-center gap-[7px]">
        <svg viewBox="0 0 20 20" className="size-5" stroke="#444" strokeLinejoin="round">
          <path d="M1.500 4.500L10 1.500l8.500 3-8.500 3z" fill="#f5f5f5" />
          <path d="M1.500 4.500L10 7.500v11l-8-4z" fill="#ddd" />
          <path d="M18.500 4.500L10 7.500v11l8-4z" fill="#bbb" />
        </svg>
        <Caret />
      </button>
    </div>
  );
}

function ElementTabs() {
  return (
    <footer className="flex h-[30px] shrink-0 items-start bg-[#d0d0d0] text-[14px] leading-5">
      <button aria-label="Tab manager" className="flex h-[30px] w-[34px] items-center justify-center">
        <svg viewBox="0 0 18 16" className="h-4 w-[18px]" fill="none" stroke="#555" strokeWidth="2">
          <path d="M1 2h16M12 7h5M13 11h3" />
          <circle cx="6" cy="9" r="3.500" />
          <path d="M8.500 11.500l4 4" />
        </svg>
      </button>
      <button aria-label="Insert new element" className="mr-[2px] flex h-[30px] w-10 items-center justify-center">
        <Plus className="size-5 text-[#555]" strokeWidth={4} />
      </button>
      <div role="tablist" aria-label="Elements" className="flex gap-[2px]">
        <button
          role="tab"
          aria-selected="true"
          className="flex h-[27px] w-[200px] items-center gap-1 rounded-b-[4px] border-b-2 border-[#1b5faa] bg-white pl-[9px] text-[#333]"
        >
          <Icon name="studio" className="size-[18px]" />
          Part Studio 1
        </button>
        <button
          role="tab"
          aria-selected="false"
          className="flex h-[27px] w-[200px] items-center gap-1 rounded-b-[4px] border-r border-b border-[#bcbcbc] bg-[#e8e8e8] pl-[9px] text-[#666]"
        >
          <Icon name="assembly" className="size-[18px]" />
          Assembly 1
        </button>
      </div>
    </footer>
  );
}

export default function App() {
  return (
    <div className="flex h-screen flex-col overflow-hidden bg-[#3c3b37] font-['Roboto',sans-serif]">
      <TopPanel />
      <div className="flex min-h-0 flex-1">
        <Launcher />
        <div className="flex min-w-0 flex-1 flex-col">
          <TabStrip />
          <AddressBar />
          <DocumentHeader />
          <FeatureToolbar />
          <main className="relative flex min-h-0 flex-1">
            <ModelView />
            <FeaturePanel />
            <ViewCube />
          </main>
          <ElementTabs />
        </div>
      </div>
    </div>
  );
}
